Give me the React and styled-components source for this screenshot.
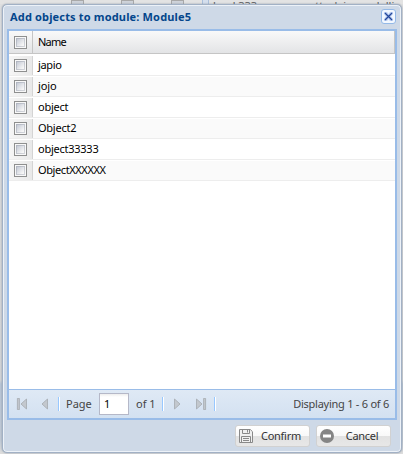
import React, { useState } from 'react';
import styled, { createGlobalStyle } from 'styled-components';

// styles
const GlobalStyle = createGlobalStyle`
  * {
    box-sizing: border-box;
  }

  body {
    margin: 0;
    overflow: hidden;
    font: 11px 'Noto Sans', Tahoma, sans-serif;
    color: #000;
  }
`;

const Page = styled.div`
  position: relative;
  width: 403px;
  height: 454px;
  padding: 4px 1px 1px 2px;
  overflow: hidden;
  background: linear-gradient(to bottom, #dedfe0 0, #d3d4d6 380px, #b9c6d6 384px, #c2cbd6 440px, #dddddd 453px);
`;

const Backdrop = styled.div`
  position: absolute;
  inset: 0 0 auto 0;
  height: 4px;
  overflow: hidden;
  background: #e3e3e3;
`;

const BackdropBox = styled.span`
  position: absolute;
  top: 0;
  left: ${({ $left }) => $left}px;
  width: 13px;
  height: 13px;
  border: 1px solid #a8a8a8;
  background: #cfd3da;
`;

const BackdropColumn = styled.span`
  position: absolute;
  left: 202px;
  width: 7px;
  height: 4px;
  border: solid #a9bfdc;
  border-width: 0 1px;
  background: #d5dfed;
`;

const BackdropText = styled.span`
  position: absolute;
  top: -2px;
  left: ${({ $left }) => $left}px;
  color: #555;
  white-space: nowrap;
`;

const Window = styled.section`
  position: relative;
  display: flex;
  flex-direction: column;
  width: 400px;
  height: 449px;
  padding: 0 4px;
  border: 1px solid #a2b1c5;
  border-radius: 5px;
  background: #ced9e7;
  box-shadow: inset 0 0 0 1px #edf2f8, 0 0 2px #8995a5;
`;

const WindowHeader = styled.header`
  display: flex;
  justify-content: space-between;
  height: 24px;
  padding: 4px 1px 0 3px;
`;

const Title = styled.h1`
  margin: 0;
  font: bold 11px/15px 'Noto Sans', Tahoma, sans-serif;
  letter-spacing: 0.16px;
  color: #04468c;
  white-space: nowrap;
`;

const CloseButton = styled.button`
  display: flex;
  width: 15px;
  height: 15px;
  padding: 0;
  border: 1px solid #94b9e7;
  border-radius: 3px;
  background: #f2f8ff;
`;

const GridPanel = styled.div`
  display: flex;
  flex-direction: column;
  width: 390px;
  height: 391px;
  border: 2px solid #99bce8;
  background: #fff;
`;

const GridRow = styled.div`
  display: flex;
  flex: none;
  height: 21px;
  border-top: 1px solid #fff;
  border-bottom: 1px solid #ededed;
  background: ${({ $striped }) => ($striped ? '#fafafa' : '#fff')};
`;

const GridHeader = styled(GridRow)`
  height: 23px;
  margin-bottom: 1px;
  border-top: 0;
  border-right: 1px solid #c5c5c5;
  border-bottom-color: #c5c5c5;
  background: linear-gradient(#f9f9f9, #e3e4e6);
`;

const CheckCell = styled.div`
  display: flex;
  align-items: center;
  width: 24px;
  padding-left: 5px;
  border-right: 1px solid ${({ $header }) => ($header ? '#c5c5c5' : '#d4d4d4')};
  background: ${({ $header }) => ($header ? 'none' : 'linear-gradient(to right, #f6f6f6, #e9e9e9)')};
`;

const Checkbox = styled.input`
  appearance: none;
  width: 13px;
  height: 13px;
  margin: 0;
  padding: 1px;
  border: 1px solid #8e8f8f;
  background:
    linear-gradient(135deg, #c6cbd6, #f6f6f6 85%) center / 7px 7px no-repeat,
    linear-gradient(135deg, #aeb3bf, #d5d7dc) center / 9px 9px no-repeat,
    #f8f8f8;
`;

const NameCell = styled.div`
  padding-left: 5px;
  line-height: ${({ $header }) => ($header ? 22 : 18)}px;
  letter-spacing: ${({ $spacing = 0 }) => $spacing}px;
`;

const PagingBar = styled.div`
  display: flex;
  align-items: center;
  height: 29px;
  margin-top: auto;
  padding: 0 6px 0 5px;
  border-top: 1px solid #99bce8;
  background: linear-gradient(#dfe9f5, #d3e1f1);
  color: #444;
`;

const PageButton = styled.button`
  display: flex;
  align-items: center;
  justify-content: center;
  width: 16px;
  height: 20px;
  margin-right: ${({ $gap }) => $gap}px;
  padding: 0;
  border: 0;
  background: none;
`;

const Separator = styled.span`
  width: 2px;
  height: 14px;
  margin-right: ${({ $gap = 0 }) => $gap}px;
  border-left: 1px solid #98c8ff;
  border-right: 1px solid #fff;
`;

const PageLabel = styled.span`
  width: ${({ $width }) => $width}px;
  padding-bottom: 1px;
  white-space: nowrap;
`;

const PageInput = styled.input`
  width: 30px;
  height: 22px;
  margin-right: 7px;
  padding: 0 4px 1px;
  border: 1px solid #b5b8c8;
  background: linear-gradient(#eee, #fff 3px);
  font: inherit;
  color: #000;
`;

const Status = styled.span`
  margin-left: auto;
  padding-bottom: 1px;
  letter-spacing: -0.25px;
  white-space: nowrap;
`;

const Footer = styled.footer`
  display: flex;
  justify-content: flex-end;
  gap: 6px;
  padding: 5px 6px 0 0;
`;

const ActionButton = styled.button`
  display: flex;
  align-items: center;
  width: 75px;
  height: 22px;
  padding: 0 3px;
  border: 1px solid #d1d1d1;
  border-radius: 3px;
  background: linear-gradient(#fff, #f9f9f9 48%, #e2e2e2 52%, #e7e7e7);
  font: inherit;
  color: #333;

  span {
    flex: 1;
    padding: 0 0 1px 3px;
    letter-spacing: -0.3px;
    text-align: center;
  }
`;

// icons
const CloseIcon = () => (
  <svg width="13" height="13" viewBox="0 0 13 13">
    <path d="M2 2h3l1.5 2L8 2h3v2L9 6.5 11 9v2H8L6.5 9 5 11H2V9l2-2.5L2 4z" fill="#bdd0f3" />
    <path d="m3 3 7 7m0-7-7 7" stroke="#24479a" strokeWidth="1.3" />
  </svg>
);

const PageArrow = ({ forward, bar }) => (
  <svg width="12" height="12" viewBox="0 0 12 12">
    <g
      transform={forward ? 'matrix(-1 0 0 1 12 0)' : undefined}
      fill="#c3c8ce"
      stroke="#a4a9af"
      strokeWidth="0.8"
    >
      {bar && <path d="M1.4.4h2v11.2h-2z" />}
      <path d={bar ? 'M10.5 1v10L5 6z' : 'M8.5 1v10L3 6z'} />
    </g>
  </svg>
);

const SaveIcon = () => (
  <svg width="14" height="14" viewBox="0 0 14 14" fill="none" stroke="#898989">
    <path d="M.5.5h10.8l2.2 2.2v10.8H.5z" fill="#f0f0f0" />
    <path d="M3.5.5v4h7v-4M8.5 1v2.5M2.5 13V7.5h9V13M4 9.5h6M4 11.5h6" />
  </svg>
);

const CancelIcon = () => (
  <svg width="14" height="14" viewBox="0 0 14 14">
    <circle cx="7" cy="7" r="7" fill="#858585" />
    <path d="M3 5.5h8v3H3z" fill="#fff" />
  </svg>
);

const objects = [
  { name: 'japio', spacing: -0.35 },
  { name: 'jojo', spacing: -0.1 },
  { name: 'object', spacing: -0.25 },
  { name: 'Object2', spacing: -0.25 },
  { name: 'object33333', spacing: -0.25 },
  { name: 'ObjectXXXXXX', spacing: -0.4 },
];

// component
const App = () => {
  const [page, setPage] = useState('1');

  return (
    <Page>
      <GlobalStyle />
      <Backdrop>
        <BackdropBox $left={71} />
        <BackdropBox $left={121} />
        <BackdropBox $left={171} />
        <BackdropColumn />
        <BackdropText $left={213}>load 333</BackdropText>
        <BackdropText $left={309}>attack in modelling</BackdropText>
      </Backdrop>
      <Window>
        <WindowHeader>
          <Title>Add objects to module: Module5</Title>
          <CloseButton aria-label="Close">
            <CloseIcon />
          </CloseButton>
        </WindowHeader>
        <GridPanel>
          <GridHeader>
            <CheckCell $header>
              <Checkbox type="checkbox" />
            </CheckCell>
            <NameCell $header $spacing={-0.8}>Name</NameCell>
          </GridHeader>
          {objects.map(({ name, spacing }, index) => (
            <GridRow key={name} $striped={index % 2 === 1}>
              <CheckCell>
                <Checkbox type="checkbox" />
              </CheckCell>
              <NameCell $spacing={spacing}>{name}</NameCell>
            </GridRow>
          ))}
          <PagingBar>
            <PageButton $gap={7} aria-label="First page">
              <PageArrow bar />
            </PageButton>
            <PageButton $gap={5} aria-label="Previous page">
              <PageArrow />
            </PageButton>
            <Separator $gap={6} />
            <PageLabel $width={33}>Page</PageLabel>
            <PageInput value={page} onChange={(event) => setPage(event.target.value)} />
            <PageLabel $width={26}>of 1</PageLabel>
            <Separator $gap={5} />
            <PageButton $gap={8} aria-label="Next page">
              <PageArrow forward />
            </PageButton>
            <PageButton $gap={5} aria-label="Last page">
              <PageArrow forward bar />
            </PageButton>
            <Separator />
            <Status>Displaying 1 - 6 of 6</Status>
          </PagingBar>
        </GridPanel>
        <Footer>
          <ActionButton>
            <SaveIcon />
            <span>Confirm</span>
          </ActionButton>
          <ActionButton>
            <CancelIcon />
            <span>Cancel</span>
          </ActionButton>
        </Footer>
      </Window>
    </Page>
  );
};

export default App;
